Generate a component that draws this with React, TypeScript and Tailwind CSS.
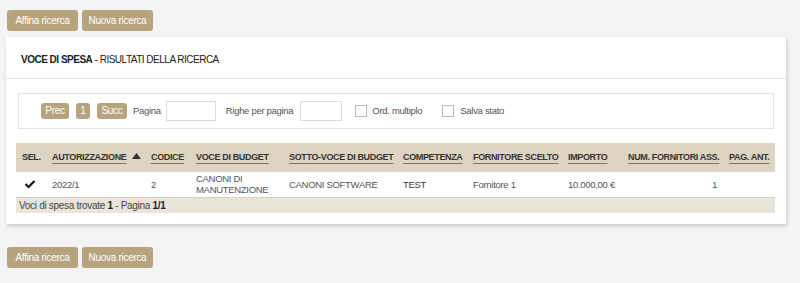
import React from 'react';

const font = "font-['Liberation_Sans',Arial,sans-serif]";

const TanButton: React.FC<{ label: string; className?: string }> = ({ label, className = '' }) => (
    <button className={`bg-[#b7a47f] text-white rounded-[3px] text-[10px] tracking-[-0.3px] leading-none ${className}`}>{label}</button>
);

const SearchButtons: React.FC = () => (
    <div className="flex gap-[4px] px-[7px]">
        <TanButton label="Affina ricerca" className="w-[71px] h-[21px]" />
        <TanButton label="Nuova ricerca" className="w-[71px] h-[21px]" />
    </div>
);

const SortUp = () => (
    <svg width="9" height="6" viewBox="0 0 9 6" className="inline-block ml-[6px] mb-[2px]">
        <polygon points="4.5,0 9,6 0,6" fill="#333" />
    </svg>
);

const Check = () => (
    <svg width="12" height="10" viewBox="0 0 12 10">
        <polyline points="1.5,5 4.5,8 10.5,2" fill="none" stroke="#111" strokeWidth="2.2" />
    </svg>
);

const columns: { label: string; width: number; sortable?: boolean; plain?: boolean }[] = [
    { label: 'SEL.', width: 30, plain: true },
    { label: 'AUTORIZZAZIONE', width: 99, sortable: true },
    { label: 'CODICE', width: 45 },
    { label: 'VOCE DI BUDGET', width: 93 },
    { label: 'SOTTO-VOCE DI BUDGET', width: 114 },
    { label: 'COMPETENZA', width: 70 },
    { label: 'FORNITORE SCELTO', width: 95 },
    { label: 'IMPORTO', width: 60 },
    { label: 'NUM. FORNITORI ASS.', width: 101 },
    { label: 'PAG. ANT.', width: 52 },
];

const App: React.FC = () => {
    return (
        <div className={`${font} bg-[#f4f4f4] w-[800px] h-[283px] pt-[10px] text-[#555]`}>
            <SearchButtons />

            <div className="mt-[6px] mx-[6px] w-[780px] bg-white shadow-[1px_2px_4px_rgba(0,0,0,0.18)]">
                <div className="px-[15px] pt-[16px] pb-[11px] border-b border-[#e8e2d5] text-[10px] tracking-[-0.5px] leading-[14px] text-[#222]">
                    <span className="font-bold">VOCE DI SPESA</span> - RISULTATI DELLA RICERCA
                </div>

                <div className="px-[10px] pt-[14px] pb-[11px]">
                    <div className="mx-[2px] h-[36px] border border-[#e2e2e2] flex items-center pl-[22px] text-[9.5px] tracking-[-0.3px] text-[#555]">
                        <TanButton label="Prec" className="w-[28px] h-[16px]" />
                        <TanButton label="1" className="w-[14px] h-[16px] ml-[7px]" />
                        <TanButton label="Succ" className="w-[30px] h-[16px] ml-[7px]" />
                        <span className="ml-[6px]">Pagina</span>
                        <input className="ml-[5px] w-[50px] h-[20px] border border-[#dcdcdc] bg-white" />
                        <span className="ml-[10px]">Righe per pagina</span>
                        <input className="ml-[7px] w-[42px] h-[20px] border border-[#dcdcdc] bg-white" />
                        <span className="ml-[13px] w-[12px] h-[12px] border border-[#bbb] bg-white" />
                        <span className="ml-[5px]">Ord. multiplo</span>
                        <span className="ml-[20px] w-[12px] h-[12px] border border-[#bbb] bg-white" />
                        <span className="ml-[6px]">Salva stato</span>
                    </div>

                    <table className="mt-[14px] w-[759px] table-fixed border-collapse text-[9.5px] tracking-[-0.3px]">
                        <colgroup>
                            {columns.map(c => <col key={c.label} style={{ width: c.width }} />)}
                        </colgroup>
                        <thead>
                            <tr className="bg-[#ddd4c2] h-[29px]">
                                {columns.map(c => (
                                    <th key={c.label} className="px-[6px] text-left font-bold text-[9px] tracking-[-0.35px] text-[#333] whitespace-nowrap">
                                        <span className={c.plain ? '' : 'underline decoration-[#7d7462] underline-offset-[3px]'}>{c.label}</span>
                                        {c.sortable && <SortUp />}
                                    </th>
                                ))}
                            </tr>
                        </thead>
                        <tbody>
                            <tr className="h-[25px] bg-white leading-[11px]">
                                <td className="pl-[8px]"><Check /></td>
                                <td className="px-[6px]">2022/1</td>
                                <td className="px-[6px]">2</td>
                                <td className="px-[6px]">CANONI DI<br />MANUTENZIONE</td>
                                <td className="px-[6px] whitespace-nowrap">CANONI SOFTWARE</td>
                                <td className="px-[6px] text-[#3a3a3a]">TEST</td>
                                <td className="px-[6px] whitespace-nowrap">Fornitore 1</td>
                                <td className="px-[6px] whitespace-nowrap">10.000,00 €</td>
                                <td className="px-[6px] text-right text-[#46607a]">1</td>
                                <td className="px-[6px]"></td>
                            </tr>
                            <tr className="h-[16px] bg-[#e9e5db] border-t border-[#d6d0c2]">
                                <td colSpan={10} className="px-[3px] text-[10px] text-[#444]">
                                    Voci di spesa trovate <b className="text-[#222]">1</b> - Pagina <b className="text-[#222]">1/1</b>
                                </td>
                            </tr>
                        </tbody>
                    </table>
                </div>
            </div>

            <div className="mt-[23px]">
                <SearchButtons />
            </div>
        </div>
    );
};

export default App;
